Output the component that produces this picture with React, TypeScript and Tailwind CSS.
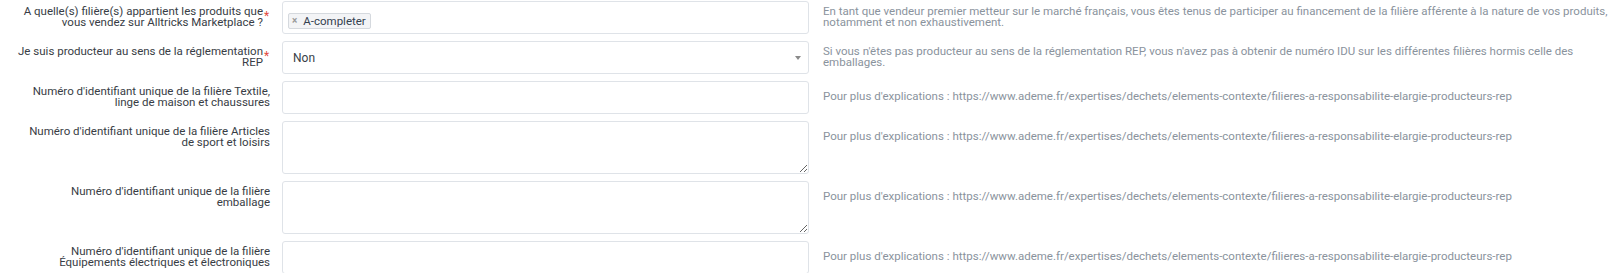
import React from "react";

type Row = {
  label: string[];
  required?: boolean;
  kind: "tags" | "select" | "input" | "textarea";
  help: string[];
};

const URL_HELP =
  "Pour plus d'explications : https://www.ademe.fr/expertises/dechets/elements-contexte/filieres-a-responsabilite-elargie-producteurs-rep";

const rows: Row[] = [
  {
    label: ["A quelle(s) filière(s) appartient les produits que", "vous vendez sur Alltricks Marketplace ?"],
    required: true,
    kind: "tags",
    help: [
      "En tant que vendeur premier metteur sur le marché français, vous êtes tenus de participer au financement de la filière afférente à la nature de vos produits,",
      "notamment et non exhaustivement.",
    ],
  },
  {
    label: ["Je suis producteur au sens de la réglementation", "REP"],
    required: true,
    kind: "select",
    help: [
      "Si vous n'êtes pas producteur au sens de la réglementation REP, vous n'avez pas à obtenir de numéro IDU sur les différentes filières hormis celle des",
      "emballages.",
    ],
  },
  {
    label: ["Numéro d'identifiant unique de la filière Textile,", "linge de maison et chaussures"],
    kind: "input",
    help: [URL_HELP],
  },
  {
    label: ["Numéro d'identifiant unique de la filière Articles", "de sport et loisirs"],
    kind: "textarea",
    help: [URL_HELP],
  },
  {
    label: ["Numéro d'identifiant unique de la filière", "emballage"],
    kind: "textarea",
    help: [URL_HELP],
  },
  {
    label: ["Numéro d'identifiant unique de la filière", "Équipements électriques et électroniques"],
    kind: "input",
    help: [URL_HELP],
  },
];

function Control({ kind }: { kind: Row["kind"] }) {
  if (kind === "tags") {
    return (
      <div className="h-[33px] border border-[#dfe3e8] rounded-[3px] bg-white pl-[5px] pt-[5px]">
        <span className="inline-flex h-[16px] items-center border border-[#d5d9de] bg-[#f3f4f6] rounded-[2px] pl-[3px] pr-[4px] text-[11.5px] leading-[14px] text-[#34414f]">
          <span className="text-[#9a9a9a] text-[10px] font-bold mr-[6px] leading-[10px]">×</span>
          A-completer
        </span>
      </div>
    );
  }
  if (kind === "select") {
    return (
      <div className="h-[33px] border border-[#dfe3e8] rounded-[3px] bg-white flex items-center justify-between pl-[10px] pr-[7px] text-[12px] text-[#3a3f47]">
        <span>Non</span>
        <span className="w-0 h-0 border-l-[3px] border-r-[3px] border-t-[4px] border-l-transparent border-r-transparent border-t-[#8a8a8a]" />
      </div>
    );
  }
  if (kind === "textarea") {
    return (
      <textarea className="block w-full h-[53px] border border-[#dfe3e8] rounded-[3px] bg-white outline-none" />
    );
  }
  return <input className="block w-full h-[33px] border border-[#dfe3e8] rounded-[3px] bg-white outline-none" />;
}

export default function App() {
  return (
    <div className="w-[1618px] h-[273px] overflow-hidden bg-white pt-px font-['Roboto',sans-serif]">
      {rows.map((row, i) => (
        <div key={i} className="flex items-start mb-[7px]">
          <div className="w-[270px] shrink-0 flex justify-end items-start mr-[12px]">
            <div className="h-[32px] flex items-center text-right text-[11.5px] leading-[11px] text-[#383d45] whitespace-nowrap">
              <div>
                {row.label.map((l, j) => (
                  <div key={j}>{l}</div>
                ))}
              </div>
            </div>
            {row.required && (
              <div className="w-[7px] pl-[1px] pt-[9px] text-[12px] leading-[12px] text-[#e24b3f]">*</div>
            )}
          </div>
          <div className="w-[527px] shrink-0">
            <Control kind={row.kind} />
          </div>
          <div className="ml-[14px] h-[32px] flex items-center text-[11.5px] leading-[11.5px] text-[#8a939d] whitespace-nowrap">
            <div>
              {row.help.map((l, j) => (
                <div key={j}>{l}</div>
              ))}
            </div>
          </div>
        </div>
      ))}
    </div>
  );
}
